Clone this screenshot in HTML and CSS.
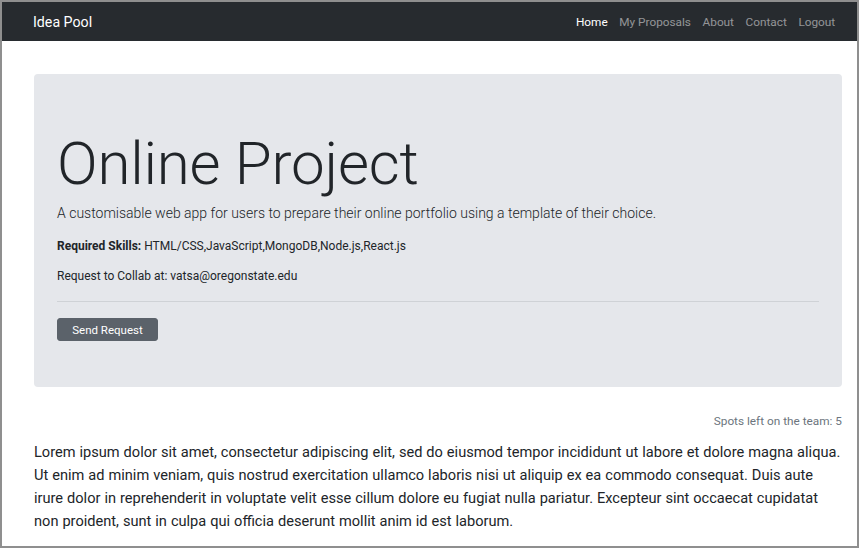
FILE: index.html
```html
<!DOCTYPE html>
<html lang="en">
<head>
<meta charset="utf-8">
<title>Idea Pool</title>
<link rel="stylesheet" href="styles.css">
</head>
<body>
<div class="frame">
  <nav class="navbar">
    <a class="brand" href="#">Idea Pool</a>
    <ul class="nav">
      <li><a class="active" href="#">Home</a></li>
      <li><a href="#">My Proposals</a></li>
      <li><a href="#">About</a></li>
      <li><a href="#">Contact</a></li>
      <li><a href="#">Logout</a></li>
    </ul>
  </nav>
  <main class="container">
    <section class="jumbotron">
      <h1 class="display">Online Project</h1>
      <p class="lead">A customisable web app for users to prepare their online portfolio using a template of their choice.</p>
      <p class="info"><strong>Required Skills:</strong> HTML/CSS,JavaScript,MongoDB,Node.js,React.js</p>
      <p class="info">Request to Collab at: vatsa@oregonstate.edu</p>
      <hr class="divider">
      <button class="btn" type="button">Send Request</button>
    </section>
    <p class="spots">Spots left on the team: 5</p>
    <p class="body-text">Lorem ipsum dolor sit amet, consectetur adipiscing elit, sed do eiusmod tempor incididunt ut labore et dolore magna aliqua. Ut enim ad minim veniam, quis nostrud exercitation ullamco laboris nisi ut aliquip ex ea commodo consequat. Duis aute irure dolor in reprehenderit in voluptate velit esse cillum dolore eu fugiat nulla pariatur. Excepteur sint occaecat cupidatat non proident, sunt in culpa qui officia deserunt mollit anim id est laborum.</p>
  </main>
</div>
</body>
</html>
```
FILE: styles.css
```css
* { box-sizing: border-box; }
html, body { margin: 0; padding: 0; background: #fff; }
body {
  font-family: Roboto, "Liberation Sans", sans-serif;
  color: #212529;
  font-size: 11.5px;
}
.frame {
  width: 859px;
  height: 548px;
  border: 2px solid #8f8f8f;
  overflow: hidden;
}
.navbar {
  height: 39px;
  background: #272b2f;
  display: flex;
  align-items: center;
  justify-content: space-between;
  padding: 0 16px 0 31px;
}
.brand {
  color: #fff;
  text-decoration: none;
  font-size: 14.2px;
}
.nav {
  list-style: none;
  margin: 0;
  padding: 0;
  display: flex;
}
.nav a {
  display: block;
  padding: 0 5.8px;
  color: rgba(255,255,255,0.5);
  text-decoration: none;
  font-size: 11.8px;
}
.nav a.active { color: #fff; }
.container {
  padding: 33px 15px 0 32px;
}
.jumbotron {
  background: #e5e7eb;
  border-radius: 4px;
  padding: 46px 23px 46px 23px;
}
.display {
  margin: 8px 0 3px 0;
  font-size: 60px;
  font-weight: 300;
  line-height: 1.2;
  letter-spacing: -0.2px;
}
.lead {
  margin: 0 0 13px 0;
  font-size: 14px;
  font-weight: 300;
  line-height: 1.5;
}
.info {
  margin: 0 0 12px 0;
  line-height: 1.5;
  font-size: 12px;
}
.info:last-of-type { margin-bottom: 11px; }
.info strong { font-weight: 700; }
.divider {
  border: 0;
  border-top: 1px solid #cfd2d6;
  margin: 16px 0 16px 0;
}
.btn {
  display: block;
  font-family: inherit;
  background: #5b626a;
  color: #fff;
  border: 1px solid #5b626a;
  border-radius: 3px;
  font-size: 11.5px;
  padding: 0;
  width: 101px;
  height: 23px;
  white-space: nowrap;
}
.spots {
  text-align: right;
  color: #6c757d;
  margin: 27px 0 13px 0;
  font-size: 11.8px;
}
.body-text {
  margin: 0;
  font-size: 14.6px;
  word-spacing: 0.35px;
  line-height: 23px;
}
```
